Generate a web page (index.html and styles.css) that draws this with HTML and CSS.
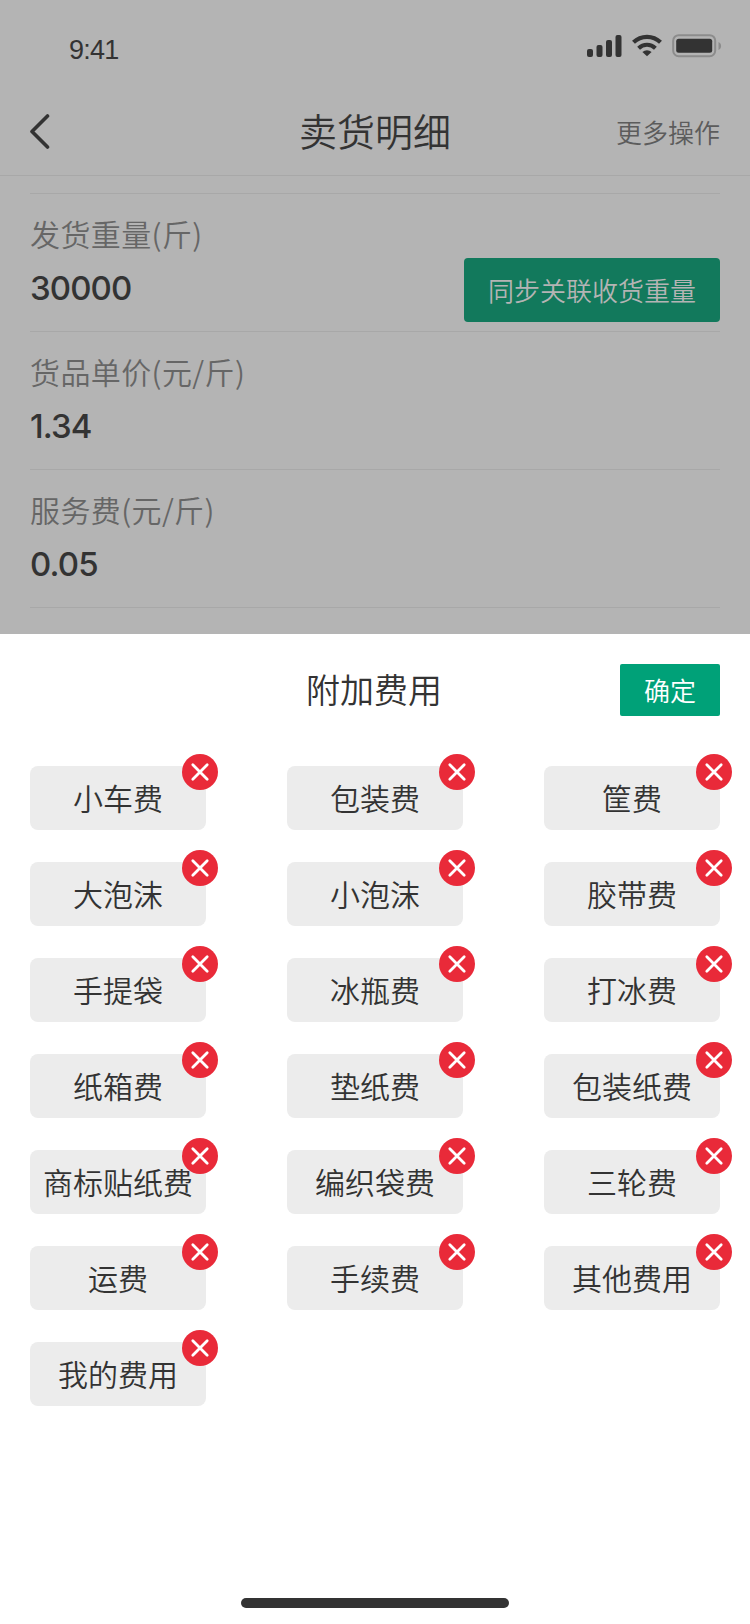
FILE: index.html
```html
<!DOCTYPE html>
<html lang="zh-CN">
<head>
  <meta charset="UTF-8" />
  <meta name="viewport" content="width=device-width, initial-scale=1.0"/>
  <title>卖货明细</title>
  <link rel="stylesheet" href="styles.css">
</head>
<body>

  <div class="page">
    <div class="status-bar">
      <span class="time">9:41</span>
      <div class="status-icons">
        <svg class="signal" width="36" height="24" viewBox="0 0 36 24">
          <rect x="1" y="15" width="6" height="8" rx="2"/>
          <rect x="10.5" y="11" width="6" height="12" rx="2"/>
          <rect x="20" y="6" width="6" height="17" rx="2"/>
          <rect x="29.5" y="1" width="6" height="22" rx="2"/>
        </svg>
        <svg class="wifi" width="32" height="24" viewBox="0 0 32 24">
          <path d="M2.500 8.300a19.500 19.500 0 0 1 27 0" fill="none" stroke="#333" stroke-width="4.200"/>
          <path d="M7.600 14.200a12 12 0 0 1 16.800 0" fill="none" stroke="#333" stroke-width="4"/>
          <path d="M11.400 17.900a7 7 0 0 1 9.200 0L16 22.300z"/>
        </svg>
        <svg class="battery" width="50" height="24" viewBox="0 0 50 24">
          <rect x="1.200" y="1.200" width="42" height="21" rx="5.500" fill="none" stroke="#8c8c8c" stroke-width="2"/>
          <rect x="4.200" y="4.800" width="36" height="14" rx="2.500"/>
          <path d="M46.500 8v8c1.600-.7 2.600-2.200 2.600-4s-1-3.300-2.600-4z" fill="#8c8c8c"/>
        </svg>
      </div>
    </div>

    <div class="nav-bar">
      <svg class="back" width="20" height="36" viewBox="0 0 20 36">
        <path d="M17.500 2L2 17.500L17.500 33" fill="none" stroke="#333" stroke-width="3.600" stroke-linecap="round" stroke-linejoin="round"/>
      </svg>
      <h1 class="nav-title">卖货明细</h1>
      <span class="nav-more">更多操作</span>
    </div>

    <div class="detail-list">
      <div class="detail-item">
        <div>
          <div class="label">发货重量(斤)</div>
          <div class="value">30000</div>
        </div>
        <button class="sync-btn">同步关联收货重量</button>
      </div>
      <div class="detail-item">
        <div>
          <div class="label">货品单价(元/斤)</div>
          <div class="value">1.34</div>
        </div>
      </div>
      <div class="detail-item">
        <div>
          <div class="label">服务费(元/斤)</div>
          <div class="value">0.05</div>
        </div>
      </div>
    </div>
  </div>

  <div class="sheet">
    <div class="sheet-header">
      <h2 class="sheet-title">附加费用</h2>
      <button class="confirm-btn">确定</button>
    </div>
    <div class="fee-grid" id="feeGrid"></div>
    <div class="home-indicator"></div>
  </div>

  <script>
    const fees = [
      '小车费', '包装费', '筐费',
      '大泡沫', '小泡沫', '胶带费',
      '手提袋', '冰瓶费', '打冰费',
      '纸箱费', '垫纸费', '包装纸费',
      '商标贴纸费', '编织袋费', '三轮费',
      '运费', '手续费', '其他费用',
      '我的费用'
    ];

    document.getElementById('feeGrid').innerHTML = fees.map(name => `
      <div class="fee">
        <span>${name}</span>
        <svg class="remove" width="36" height="36" viewBox="0 0 36 36">
          <circle cx="18" cy="18" r="18" fill="#e92a39"/>
          <path d="M10.800 10.800L25.200 25.200M25.200 10.800L10.800 25.200" stroke="#fff" stroke-width="2.800" stroke-linecap="round"/>
        </svg>
      </div>
    `).join('');
  </script>

</body>
</html>
```

FILE: styles.css
```css
* {
  box-sizing: border-box;
}
body {
  margin: 0;
  width: 750px;
  height: 1624px;
  display: flex;
  flex-direction: column;
  overflow: hidden;
  background-color: #fff;
  color: #333;
  font-family: 'Noto Sans CJK SC', sans-serif;
  font-weight: 350;
}
h1, h2 {
  margin: 0;
  font-weight: 350;
}
button {
  border: 0;
  padding: 0 0 2px;
  font-family: inherit;
  font-weight: 350;
}
.page {
  height: 634px;
  background-color: #b4b4b4;
}

/* status bar */
.status-bar {
  height: 88px;
  padding: 34px 28px 0 69px;
  display: flex;
  justify-content: space-between;
}
.time {
  font-family: 'Liberation Sans', sans-serif;
  font-size: 27px;
  font-weight: 400;
  line-height: 32px;
  letter-spacing: -0.8px;
}
.status-icons {
  display: flex;
  gap: 9px;
  fill: #333;
}

/* nav bar */
.nav-bar {
  height: 88px;
  padding: 0 30px;
  display: grid;
  grid-template-columns: 1fr auto 1fr;
  align-items: center;
  border-bottom: 1px solid #a8a8a8;
}
.nav-title {
  padding-bottom: 4px;
  font-size: 38px;
  line-height: 56px;
}
.nav-more {
  justify-self: end;
  font-size: 26px;
  color: #5c5c5c;
}

/* detail list */
.detail-list {
  margin: 17px 30px 0;
  border-top: 1px solid #a8a8a8;
}
.detail-item {
  height: 138px;
  padding: 17px 0 9px;
  display: flex;
  justify-content: space-between;
  border-bottom: 1px solid #a8a8a8;
}
.label {
  font-size: 30px;
  line-height: 44px;
  letter-spacing: 0.4px;
  color: #666;
}
.value {
  margin-top: 11px;
  font-family: 'Inter', sans-serif;
  font-size: 33px;
  line-height: 44px;
  font-weight: 500;
  letter-spacing: -0.9px;
}
.sync-btn {
  align-self: flex-end;
  width: 256px;
  height: 64px;
  border-radius: 4px;
  background-color: #12795c;
  color: #b4b4b4;
  font-size: 26px;
}

/* bottom sheet */
.sheet {
  flex: 1;
  padding: 30px 30px 16px;
  display: flex;
  flex-direction: column;
}
.sheet-header {
  height: 52px;
  display: grid;
  grid-template-columns: 1fr auto 1fr;
  align-items: center;
}
.sheet-title {
  grid-column: 2;
  padding: 0 2px 2px 0;
  font-size: 34px;
  line-height: 50px;
}
.confirm-btn {
  justify-self: end;
  width: 100px;
  height: 52px;
  border-radius: 2px;
  background-color: #00a178;
  color: #fff;
  font-size: 26px;
}
.fee-grid {
  margin-top: 50px;
  display: grid;
  grid-template-columns: repeat(3, 176px);
  justify-content: space-between;
  row-gap: 32px;
}
.fee {
  position: relative;
  height: 64px;
  padding-bottom: 2px;
  display: flex;
  align-items: center;
  justify-content: center;
  border-radius: 8px;
  background-color: #ececec;
  font-size: 30px;
  white-space: nowrap;
}
.remove {
  position: absolute;
  top: -12px;
  right: -12px;
}
.home-indicator {
  width: 268px;
  height: 10px;
  margin: auto auto 0;
  border-radius: 5px;
  background-color: #333;
}
```
